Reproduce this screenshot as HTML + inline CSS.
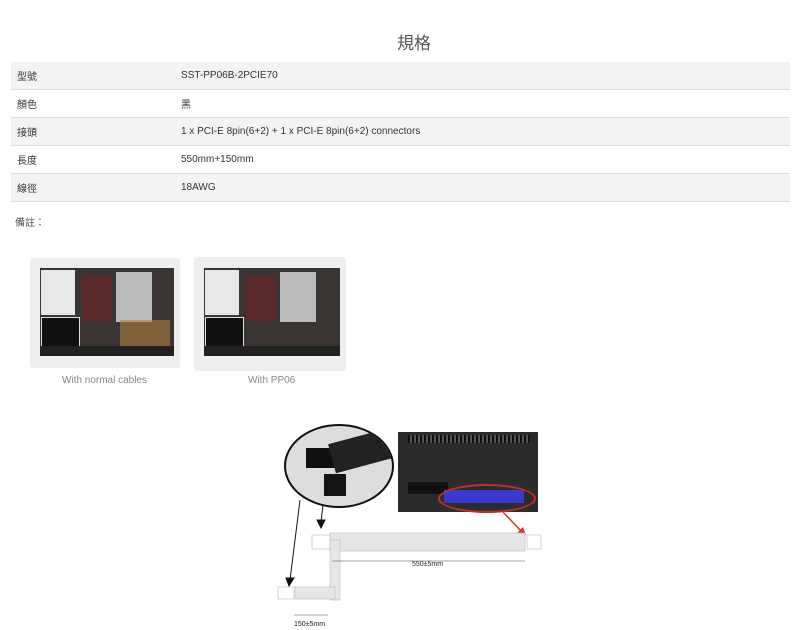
<!DOCTYPE html>
<html><head><meta charset="utf-8"><style>
body{margin:0;background:#fff;font-family:"Liberation Sans","Noto Sans CJK TC",sans-serif;color:#333;width:800px;height:630px;overflow:hidden;position:relative}
.title{position:absolute;top:29px;left:397px;font-size:17px;color:#555}
table{position:absolute;left:11px;top:62px;width:779px;border-collapse:collapse;font-size:10px}
td{height:27px;padding:0 0 0 6px;border-bottom:1px solid #ddd;vertical-align:middle}
tr:nth-child(odd) td{background:#f3f3f3}
td:first-child{width:158px}
.note{position:absolute;left:15px;top:214px;font-size:10px;color:#555}
.a{position:absolute}
</style></head><body>
<div class="title">規格</div>
<table>
<tr><td>型號</td><td>SST-PP06B-2PCIE70</td></tr>
<tr><td>顏色</td><td>黑</td></tr>
<tr><td>接頭</td><td>1 x PCI-E 8pin(6+2) + 1 x PCI-E 8pin(6+2) connectors</td></tr>
<tr><td>長度</td><td>550mm+150mm</td></tr>
<tr><td>線徑</td><td>18AWG</td></tr>
</table>
<div class="note">備註：</div>

<!-- case 1 -->
<div class="a" style="left:30px;top:258px;width:150px;height:110px;background:#eee;border-radius:3px"></div>
<div class="a" style="left:40px;top:268px;width:134px;height:88px;background:#3a3432"></div>
<div class="a" style="left:41px;top:270px;width:34px;height:45px;background:#e8e8e8"></div>
<div class="a" style="left:41px;top:317px;width:37px;height:30px;background:#111;border:1px solid #ddd"></div>
<div class="a" style="left:82px;top:276px;width:30px;height:45px;background:#5a2a28"></div>
<div class="a" style="left:116px;top:272px;width:36px;height:50px;background:#bbb"></div>
<div class="a" style="left:120px;top:320px;width:50px;height:30px;background:#b08040;opacity:.6"></div>
<div class="a" style="left:40px;top:346px;width:134px;height:10px;background:#222"></div>
<div class="a" style="left:62px;top:375px;font-size:10px;color:#888">With normal cables</div>
<!-- case 2 -->
<div class="a" style="left:194px;top:257px;width:152px;height:114px;background:#eee;border-radius:3px"></div>
<div class="a" style="left:204px;top:268px;width:136px;height:88px;background:#3a3432"></div>
<div class="a" style="left:205px;top:270px;width:34px;height:45px;background:#e8e8e8"></div>
<div class="a" style="left:205px;top:317px;width:37px;height:30px;background:#111;border:1px solid #ddd"></div>
<div class="a" style="left:246px;top:276px;width:30px;height:45px;background:#5a2a28"></div>
<div class="a" style="left:280px;top:272px;width:36px;height:50px;background:#bbb"></div>
<div class="a" style="left:204px;top:346px;width:136px;height:10px;background:#222"></div>
<div class="a" style="left:248px;top:375px;font-size:10px;color:#888">With PP06</div>

<!-- circle -->
<div class="a" style="left:284px;top:424px;width:106px;height:80px;border:2px solid #111;border-radius:50%;background:#ddd;overflow:hidden">
<div class="a" style="left:20px;top:22px;width:30px;height:20px;background:#111"></div>
<div class="a" style="left:45px;top:10px;width:60px;height:30px;background:#222;transform:rotate(-15deg)"></div>
<div class="a" style="left:38px;top:48px;width:22px;height:22px;background:#151515"></div>
</div>
<!-- psu -->
<div class="a" style="left:398px;top:432px;width:140px;height:80px;background:#2b2b2b"></div>
<div class="a" style="left:408px;top:435px;width:122px;height:8px;background:repeating-linear-gradient(90deg,#111 0 2px,#555 2px 4px)"></div>
<div class="a" style="left:408px;top:482px;width:40px;height:12px;background:#111"></div>
<div class="a" style="left:444px;top:490px;width:80px;height:13px;background:#3a3ad0"></div>
<div class="a" style="left:438px;top:484px;width:94px;height:25px;border:2px solid #c0302a;border-radius:50%"></div>
<svg class="a" style="left:0;top:0" width="800" height="630">
<g stroke="#111" fill="#111">
<line x1="300" y1="500" x2="290" y2="580" stroke-width="1"/><path d="M286 578 L294 578 L289 586Z"/>
<line x1="323" y1="505" x2="321" y2="522"/><path d="M317 520 L325 520 L321 528Z"/>
</g>
<line x1="503" y1="512" x2="522" y2="532" stroke="#d33" stroke-width="1.5"/><path d="M517 533 L526 535 L523 527Z" fill="#d33"/>
<g fill="#e6e6e6" stroke="#bbb" stroke-width="0.6">
<rect x="330" y="533" width="195" height="18"/>
<rect x="330" y="540" width="10" height="60"/>
<rect x="295" y="587" width="40" height="12"/>
<rect x="312" y="535" width="18" height="14" fill="#fff"/>
<rect x="527" y="535" width="14" height="14" fill="#fff"/>
<rect x="278" y="587" width="16" height="12" fill="#fff"/>
</g>
<line x1="332" y1="561" x2="525" y2="561" stroke="#444" stroke-width="0.6"/>
<line x1="294" y1="615" x2="328" y2="615" stroke="#444" stroke-width="0.6"/>
<text x="412" y="566" font-size="7" font-family="Liberation Sans" fill="#222">550±5mm</text>
<text x="294" y="626" font-size="7" font-family="Liberation Sans" fill="#222">150±5mm</text>
</svg>
</body></html>
